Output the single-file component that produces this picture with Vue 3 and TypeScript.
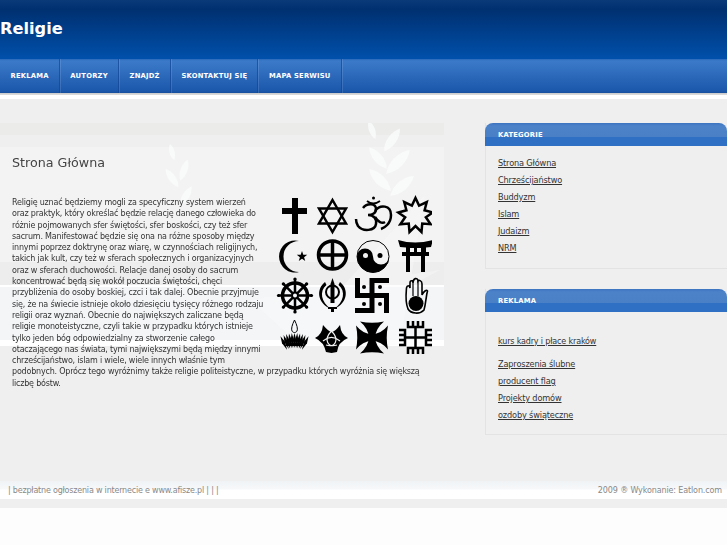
<script setup lang="ts">
const nav: string[] = ['Reklama', 'Autorzy', 'Znajdź', 'Skontaktuj się', 'Mapa serwisu']
const categories: string[] = ['Strona Główna', 'Chrześcijaństwo', 'Buddyzm', 'Islam', 'Judaizm', 'NRM']
const ads: string[] = ['Zaproszenia ślubne', 'producent flag', 'Projekty domów', 'ozdoby świąteczne']
const lines: string[] = [
  'Religię uznać będziemy mogli za specyficzny system wierzeń',
  'oraz praktyk, który określać będzie relację danego człowieka do',
  'różnie pojmowanych sfer świętości, sfer boskości, czy też sfer',
  'sacrum. Manifestować będzie się ona na różne sposoby między',
  'innymi poprzez doktrynę oraz wiarę, w czynnościach religijnych,',
  'takich jak kult, czy też w sferach społecznych i organizacyjnych',
  'oraz w sferach duchowości. Relacje danej osoby do sacrum',
  'koncentrować będą się wokół poczucia świętości, chęci',
  'przybliżenia do osoby boskiej, czci i tak dalej. Obecnie przyjmuje',
  'się, że na świecie istnieje około dziesięciu tysięcy różnego rodzaju',
  'religii oraz wyznań. Obecnie do największych zaliczane będą',
  'religie monoteistyczne, czyli takie w przypadku których istnieje',
  'tylko jeden bóg odpowiedzialny za stworzenie całego',
  'otaczającego nas świata, tymi największymi będą między innymi',
  'chrześcijaństwo, islam i wiele, wiele innych właśnie tym',
  'podobnych. Oprócz tego wyróżnimy także religie politeistyczne, w przypadku których wyróżnia się większą',
  'liczbę bóstw.'
]

function star(cx: number, cy: number, n: number, R: number, r: number): string {
  const pts: string[] = []
  for (let i = 0; i < n * 2; i++) {
    const a = -Math.PI / 2 + (i * Math.PI) / n
    const d = i % 2 === 0 ? R : r
    pts.push(`${(cx + d * Math.cos(a)).toFixed(2)},${(cy + d * Math.sin(a)).toFixed(2)}`)
  }
  return pts.join(' ')
}
const bahai = star(415.5, 215.5, 9, 17.5, 10.5)
const fiveStar = star(302, 256.5, 5, 5.5, 2.2)
const wheelAngles: number[] = [0, 45, 90, 135, 180, 225, 270, 315]
const petals: number[] = [-26, -20, -15, -10, -5, 0, 5, 10, 15, 20, 26]
const leaves: { x: number; y: number; r: number; s: number }[] = [
  { x: 372, y: 130, r: -20, s: 0.7 }, { x: 392, y: 140, r: 35, s: 1 }, { x: 378, y: 158, r: -40, s: 1 },
  { x: 398, y: 162, r: 45, s: 1.2 }, { x: 380, y: 180, r: -45, s: 1.1 }, { x: 402, y: 186, r: 50, s: 1.1 },
  { x: 172, y: 152, r: -15, s: 0.6 }, { x: 184, y: 170, r: 20, s: 0.8 }, { x: 172, y: 178, r: -35, s: 0.8 },
  { x: 186, y: 196, r: 30, s: 0.8 }
]
</script>

<template>
  <div class="page">
    <header class="top">
      <h1>Religie</h1>
    </header>
    <nav class="menu">
      <a v-for="item in nav" :key="item" href="#">{{ item }}</a>
    </nav>
    <div class="rule"></div>
    <main class="main">
      <section class="left">
        <svg class="wm" viewBox="0 123 444 223" aria-hidden="true">
          <g fill="#fbfcfd" opacity="0.75">
            <path v-for="(l, i) in leaves" :key="i" d="M0 -14 C6 -6 6 6 0 14 C-6 6 -6 -6 0 -14Z"
              :transform="`translate(${l.x} ${l.y}) rotate(${l.r}) scale(${l.s})`" />
            <path d="M290 345 L425 195 L400 345Z M250 300 L440 270 L300 345Z" opacity="0.5" />
          </g>
        </svg>
        <article class="article">
          <h2>Strona Główna</h2>
          <svg class="symbols" viewBox="276 192 156 170" role="img" aria-label="Symbole religijne">
            <!-- cross -->
            <path d="M292 198h6v10h9v6h-9v20h-6v-20h-10v-6h10z" />
            <!-- star of David -->
            <g class="ln w25">
              <path d="M332.5 200 L346 223.5 L319 223.5Z" />
              <path d="M332.5 232 L346 208.5 L319 208.5Z" />
            </g>
            <!-- om -->
            <g class="ln w25">
              <path d="M363 208 C367 203 376 203 376 209 C376 214 371 215 368 215 C374 215 377 219 376 224 C375 231 363 232 358 226 C356 223 356 221 356 219" />
              <path d="M375 211 C380 204 391 205 391 215 C391 224 384 228 381 229" />
              <path d="M375 217 C378 222 382 224 385 222" />
              <path d="M367 201 Q373 206 380 201" stroke-width="1.8" />
            </g>
            <circle cx="373.5" cy="198" r="1.5" />
            <!-- nine point star -->
            <polygon class="ln w25" :points="bahai" />
            <!-- crescent and star -->
            <path d="M299 241 A16 16 0 1 0 299 272 A13.5 13.5 0 1 1 299 241Z" />
            <polygon :points="fiveStar" />
            <!-- circled cross -->
            <g class="ln w35">
              <circle cx="332.5" cy="255" r="14" />
              <path d="M332.5 241V269M318.5 255H346.5" />
            </g>
            <!-- yin yang -->
            <circle class="ln" cx="373" cy="256.5" r="16" stroke-width="1" />
            <path d="M357 256.5 A8 8 0 0 1 373 256.5 A8 8 0 0 0 389 256.5 A16 16 0 0 1 357 256.5Z" />
            <circle cx="365.5" cy="255.5" r="2.5" fill="#f3f3f3" />
            <circle cx="380" cy="255.5" r="2.5" />
            <!-- torii -->
            <path d="M398 240 Q415 245 433 240 L431 247 L426 247.5 L426 252 L429 252 L429 256 L425 256 L425 272 L421 272 L421 256 L410 256 L410 272 L406 272 L406 256 L402 256 L402 252 L406 252 L406 247.500 L400 247Z M410 248 L410 252 L414 252 L414 248Z M417 248 L417 252 L421 252 L421 248Z" fill-rule="evenodd" />
            <!-- wheel -->
            <g class="ln w35">
              <circle cx="295" cy="295.500" r="12.500" />
              <circle cx="295" cy="295.500" r="3" stroke-width="2" />
              <g v-for="a in wheelAngles" :key="a" :transform="`rotate(${a} 295 295.5)`">
                <path d="M295 292V278.500" stroke-width="2.500" />
                <circle cx="295" cy="279" r="1.600" fill="#000" stroke="none" />
              </g>
            </g>
            <!-- khanda -->
            <path d="M332.500 278 L334.500 284 L334.500 303 L330.500 303 L330.500 284Z" />
            <circle class="ln" cx="332.500" cy="292" r="6.500" stroke-width="2" />
            <path d="M325 282 C316 289 317 303 331 309 C321 302 319 291 326.500 285Z" />
            <path d="M340 282 C349 289 348 303 334 309 C344 302 346 291 338.500 285Z" />
            <path d="M328 307 H337 V309 H334 V312 H331 V309 H328Z" />
            <!-- swastika with dots -->
            <path class="ln" stroke-width="5" d="M389 280.500 H372 V310.500 H355 M357.500 278 V295.500 H386.500 V313" />
            <circle cx="364" cy="287" r="2" /><circle cx="380" cy="287" r="2" />
            <circle cx="364" cy="304" r="2" /><circle cx="380" cy="304" r="2" />
            <!-- jain hand -->
            <path class="ln" stroke-width="1.600" d="M408 309 C405 302 406 294 406.500 288 C407 285 409.500 285 410 288 L410 283 C410 280 413 280 413 283 C413 278 417.500 277 418 281 C418.500 280 422 280 422 284 L422 295 C424 291 427 289 427.500 291 C426 296 426 303 424 310 C420 314.500 411 314 408 309Z" />
            <path class="ln" stroke-width="1.200" d="M413 283V296M418 281V296" />
            <circle cx="416" cy="303.500" r="7.500" />
            <!-- lotus and flame -->
            <path class="ln" stroke-width="1" d="M294.500 320 C292 325 291 329 292 331 C293 333 296 333 297 331 C298 329 297 325 294.500 320Z" />
            <path v-for="p in petals" :key="p" d="M294.500 348 L292.800 340 L294.500 333 L296.200 340Z"
              :transform="`rotate(${p} 294.5 365)`" />
            <rect x="286" y="343" width="17" height="3" />
            <!-- horned triple knot -->
            <path d="M315 338 Q322 335 323 325 Q329 332 331.500 332 Q335 332 340 325 Q341 335 348 338 Q338 342 337 352 L331.500 353 L326 352 Q324 342 315 338Z" />
            <g class="ln" stroke="#f3f3f3" stroke-width="1.200">
              <path d="M331.500 331 C340 340 335 348 326 345 M331.500 331 C323 340 328 348 337 345 M323 341 C329 336 334 336 340 341" stroke="#f3f3f3" />
            </g>
            <!-- cross pattee -->
            <g v-for="a in [0, 90, 180, 270]" :key="a" :transform="`rotate(${a} 372 337.5)`">
              <path d="M369 337.500 Q368 328 360 321.500 Q372 324 384 321.500 Q376 328 375 337.500Z" />
            </g>
            <!-- comb cross -->
            <g class="ln w25">
              <path d="M415.500 327V348M405 337.500H426" />
              <path d="M408 321V327H423V321M413 321V327M418 321V327" />
              <path d="M408 354V348H423V354M413 354V348M418 354V348" />
              <path d="M399 330H405V345H399M399 335H405M399 340H405" />
              <path d="M432 330H426V345H432M432 335H426M432 340H426" />
            </g>
          </svg>
          <p><span v-for="(line, i) in lines" :key="i" class="line">{{ line }}</span></p>
        </article>
      </section>
      <aside class="side">
        <div class="box">
          <h3>Kategorie</h3>
          <ul>
            <li v-for="c in categories" :key="c"><a href="#">{{ c }}</a></li>
          </ul>
        </div>
        <div class="box">
          <h3>Reklama</h3>
          <ul class="ads">
            <li class="first"><a href="#">kurs kadry i płace kraków</a></li>
            <li v-for="a in ads" :key="a"><a href="#">{{ a }}</a></li>
          </ul>
        </div>
      </aside>
    </main>
    <footer class="foot">
      <span class="foot-left">| bezpłatne ogłoszenia w internecie e www.afisze.pl | | |</span>
      <span>2009 ® Wykonanie: Eatlon.com</span>
    </footer>
    <div class="endband"></div>
  </div>
</template>

<style>
html, body { margin: 0; background: #fdfdfd; }
</style>

<style scoped>
.page { font-family: "DejaVu Sans", Verdana, sans-serif; color: #333; height: 545px; overflow: hidden; }
.top {
  height: 59px;
  box-sizing: border-box;
  background: linear-gradient(#0a3a78 0, #003070 9px, #0050ab 100%);
  padding: 18px 0 0 0;
}
.top h1 { margin: 0; font-size: 16.2px; line-height: 22px; font-weight: bold; color: #fff; }
.menu {
  height: 34px;
  box-sizing: border-box;
  display: flex;
  background: linear-gradient(#2a69bb 0, #3c7ac9 2px, #1b57ab 32px, #174f9c 100%);
}
.menu a {
  box-sizing: border-box;
  padding: 0 10.2px 0 10.5px;
  line-height: 34px;
  font-size: 6.8px;
  font-weight: bold;
  letter-spacing: 0.2px;
  text-transform: uppercase;
  color: #fff;
  text-decoration: none;
  border-right: 1px solid rgba(20, 70, 150, 0.7);
  box-shadow: 1px 0 0 rgba(255, 255, 255, 0.12);
  white-space: nowrap;
}
.rule { height: 6px; background: linear-gradient(#c9c9c9 0, #dedede 2px, #fff 2px, #fff 100%); }
.main { display: flex; min-height: 382px; box-sizing: border-box; padding-top: 24px; background: #efefef; }
.left {
  position: relative;
  width: 444px;
  height: 358px;
  flex: none;
  background: linear-gradient(
    #ebebea 0, #ebebea 12px, #efefef 12px, #efefef 24px,
    #f3f3f3 24px, #f3f3f3 139px, #ededed 139px, #ededed 162px,
    #fff 162px, #fff 164px, #f3f5f7 164px, #f3f5f7 217px,
    #fff 217px, #fff 223px, #efefef 223px
  );
}
.wm { position: absolute; left: 0; top: 0; width: 444px; height: 223px; }
.article { position: relative; padding: 32px 12px 0; }
.article h2 { margin: 0; font-size: 12.7px; line-height: 16px; font-weight: normal; color: #444; }
.symbols { float: right; width: 156px; height: 170px; margin-top: 21px; }
.symbols path, .symbols polygon { fill: #000; }
.symbols .ln, .symbols .ln path, .symbols .ln polygon, .symbols .ln circle { fill: none; stroke: #000; }
.symbols .w25 { stroke-width: 2.5; }
.symbols .w35 { stroke-width: 3.5; }
.symbols .ln g circle { fill: #000; stroke: none; }
.symbols path[stroke="#f3f3f3"] { stroke: #f3f3f3; }
.article p { margin: 26px 0 0; font-size: 8px; letter-spacing: -0.2px; line-height: 11.3px; color: #333; }
.line { display: block; white-space: nowrap; }
.side { flex: 1; margin-left: 41px; min-width: 0; }
.box { margin-bottom: 20px; background: #efefef; border-left: 1px solid #e3e3e3; border-bottom: 1px solid #e3e3e3; box-sizing: border-box; }
.box:first-child { height: 146px; }
.box:last-child { height: 146px; }
.box h3 {
  margin: 0 0 0 -1px;
  height: 23px;
  box-sizing: border-box;
  padding-left: 13px;
  font-size: 6.8px;
  line-height: 24px;
  font-weight: bold;
  letter-spacing: 0.2px;
  text-transform: uppercase;
  color: #fff;
  border-radius: 8px 8px 0 0;
  background: linear-gradient(#3c74c0 0, #4c82c8 3px, #4a80c6 14px, #2f6fc4 14px, #2f6fc4 100%);
}
.box ul { margin: 0; padding: 9px 0 0 12px; list-style: none; }
.box li { height: 17px; font-size: 8.2px; letter-spacing: -0.15px; line-height: 17px; }
.box a { color: #333; text-decoration: underline; }
.ads { padding-top: 21px !important; }
.ads .first { margin-bottom: 6px; font-size: 8px; }
.foot {
  height: 18px;
  display: flex;
  justify-content: space-between;
  align-items: center;
  padding: 0 5px 0 8px;
  font-size: 8px;
  letter-spacing: -0.12px;
  color: #888;
  background: linear-gradient(#f0f3f5 0, #f6f8fa 8px, #fff 9px, #fff 100%);
}
.foot-left { letter-spacing: -0.2px; }
.endband { height: 9px; background: #efefef; }
</style>
